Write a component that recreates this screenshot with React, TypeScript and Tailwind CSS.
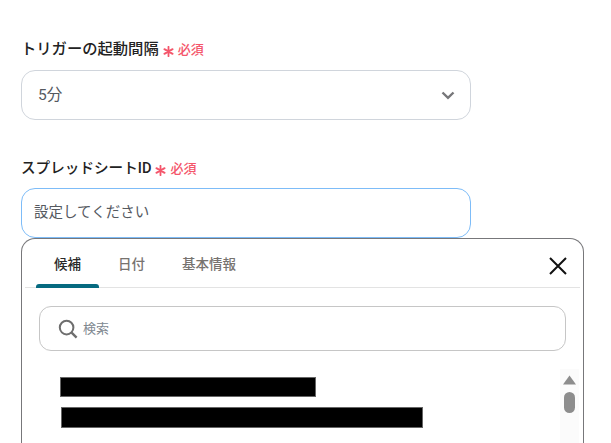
const FONT_STACK = "font-['Roboto','Noto_Sans_CJK_JP',sans-serif]";

function FieldLabel({ text, sizeClass }: { text: string; sizeClass: string }) {
  return (
    <div className="flex h-[20px] items-center">
      <span className={"leading-[20px] font-medium text-[#222222] " + sizeClass}>{text}</span>
      <span className="mt-[2px] ml-[4px] flex items-center text-[#f4566b]">
        <svg className="mt-[2px]" width="11" height="11" viewBox="0 0 11 11" fill="none" stroke="currentColor" strokeWidth="1.8" strokeLinecap="round">
          <path d="M5.5 0.8V10.2M1.4 3.1L9.6 7.9M9.6 3.1L1.4 7.9" />
        </svg>
        <span className="ml-[4px] text-[13px] leading-[18px] font-medium">必須</span>
      </span>
    </div>
  );
}

function Tab({ label, active }: { label: string; active?: boolean }) {
  return (
    <div
      className={
        "relative flex h-[49px] w-[63px] items-center justify-center pt-[3px] text-[13.5px] font-medium " +
        (active ? "text-[#2a2a2a]" : "text-[#77736f]")
      }
    >
      {label}
      {active && <span className="absolute right-0 bottom-0 left-0 h-[4px] rounded-t-[3px] bg-[#066a80]" />}
    </div>
  );
}

export default function App() {
  return (
    <div className={"h-[443px] w-[611px] overflow-hidden bg-white pt-[39px] pl-[21px] " + FONT_STACK}>
      <FieldLabel text="トリガーの起動間隔" sizeClass="text-[15.3px]" />
      <div className="mt-[11px] flex h-[50px] w-[450px] items-center justify-between rounded-[14px] border border-[#d0d5dc] pr-[15px] pl-[16px] text-[15.5px] text-[#55595f]">
        <span className="pt-[1px]">5分</span>
        <svg width="14" height="9" viewBox="0 0 14 9" fill="none" stroke="#77777a" strokeWidth="2.4">
          <path d="M1.5 1.5L7 6.8L12.5 1.5" />
        </svg>
      </div>

      <div className="mt-[38px]">
        <FieldLabel text="スプレッドシートID" sizeClass="text-[14.6px]" />
      </div>
      <div className="mt-[10px] flex h-[50px] w-[450px] items-center rounded-[14px] border border-[#7dbcf8] pl-[12px] text-[14.5px] text-[#55595f]">
        設定してください
      </div>

      <div className="h-[220px] w-[563px] rounded-t-[14px] border border-b-0 border-[#77777a] pr-[3px] pl-[3px]">
        <div className="flex h-[49px] items-center border-b border-[#e3e3e3] pl-[11px]">
          <Tab label="候補" active />
          <div className="ml-[1px]">
            <Tab label="日付" />
          </div>
          <div className="ml-[7px] flex h-[49px] w-[78px] items-center justify-center pt-[3px] text-[13.5px] font-medium text-[#77736f]">
            基本情報
          </div>
          <svg className="mt-[5px] mr-[13px] ml-auto" width="18" height="18" viewBox="0 0 18 18" fill="none" stroke="#111111" strokeWidth="2">
            <path d="M1 1L17 17M17 1L1 17" />
          </svg>
        </div>

        <div className="mt-[18px] ml-[14px] flex h-[45px] w-[527px] items-center rounded-[12px] border border-[#c6c6c6] pl-[18px]">
          <svg width="20" height="20" viewBox="0 0 20 20" fill="none" stroke="#6e6e6e" strokeWidth="2">
            <circle cx="8.6" cy="8.6" r="6.8" />
            <path d="M13.6 13.6L18.6 18.6" strokeWidth="2.4" />
          </svg>
          <span className="ml-[5px] text-[13px] text-[#808890]">検索</span>
        </div>

        <div className="mt-[18px] flex pr-[1px]">
          <div className="min-w-0 flex-1 pt-[8px]">
            <div className="ml-[35px] h-[20px] w-[256px] border border-[#666666] bg-black" />
            <div className="mt-[10px] ml-[36px] h-[21px] w-[362px] border border-[#666666] bg-black" />
          </div>
          <div className="flex h-[80px] w-[19px] flex-col items-center bg-[#fbfbfb] pt-[6px]">
            <svg width="13" height="10" viewBox="0 0 13 10" fill="#8d8d8d">
              <path d="M6.5 0.5L13 9.5H0Z" />
            </svg>
            <div className="mt-[7px] h-[21px] w-[11px] rounded-full bg-[#8d8d8d]" />
          </div>
        </div>
      </div>
    </div>
  );
}
